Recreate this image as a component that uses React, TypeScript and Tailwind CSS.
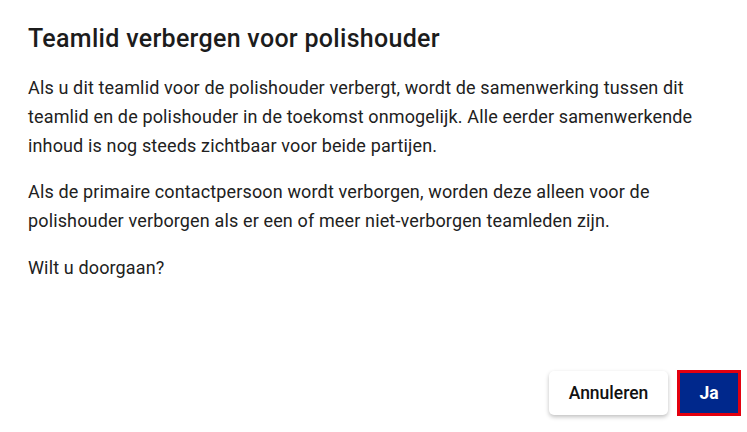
import React from 'react';

export default function App() {
  return (
    <div className="flex h-[432px] w-[747px] flex-col bg-white font-['Roboto',sans-serif] text-[#212121]">
      <div className="px-7 pt-6">
        <h1 className="mb-5 text-[25px] font-medium leading-[30px] tracking-[0.3px] text-[#1c1c1c]">
          Teamlid verbergen voor polishouder
        </h1>
        <p className="mb-[18px] text-[18px] leading-[28.8px] tracking-[0.14px]">
          Als u dit teamlid voor de polishouder verbergt, wordt de samenwerking tussen dit teamlid en de polishouder in
          de toekomst onmogelijk. Alle eerder samenwerkende inhoud is nog steeds zichtbaar voor beide partijen.
        </p>
        <p className="mb-[18px] text-[18px] leading-[28.8px] tracking-[0.14px]">
          Als de primaire contactpersoon wordt verborgen, worden deze alleen voor de polishouder verborgen als er een of
          meer niet-verborgen teamleden zijn.
        </p>
        <p className="text-[18px] leading-[28.8px] tracking-[0.14px]">Wilt u doorgaan?</p>
      </div>
      <div className="mt-auto flex items-center justify-end gap-[9px] pb-4 pr-[6px]">
        <button className="h-[44px] w-[119px] rounded-[5px] bg-white text-[17.5px] font-medium text-[#111] shadow-[0_2px_4px_rgba(0,0,0,0.25)]">
          Annuleren
        </button>
        <button className="h-[46px] w-[64px] border-[3px] border-[#e3000f] bg-[#00288c] text-[17.5px] font-bold text-white">
          Ja
        </button>
      </div>
    </div>
  );
}
